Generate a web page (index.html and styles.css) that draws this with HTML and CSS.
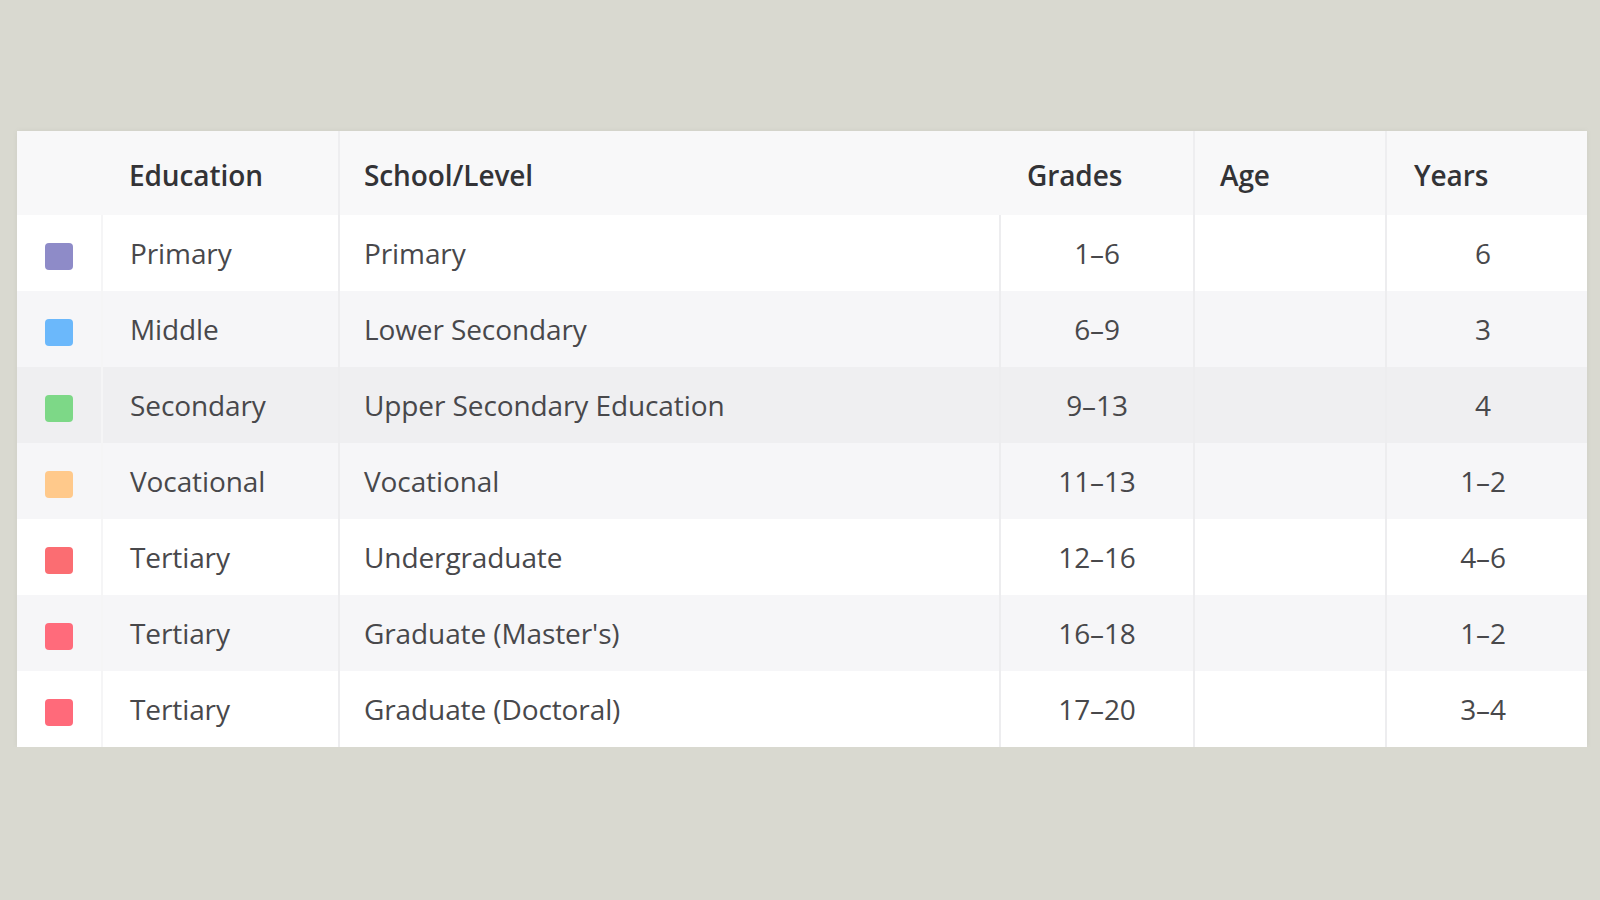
FILE: index.html
```html
<!DOCTYPE html>
<html lang="en">
<head>
<meta charset="utf-8">
<title>Education levels</title>
<link rel="stylesheet" href="styles.css">
</head>
<body>
<main class="page">
  <table class="edu">
    <colgroup>
      <col class="c-swatch">
      <col class="c-edu">
      <col class="c-school">
      <col class="c-grades">
      <col class="c-age">
      <col class="c-years">
    </colgroup>
    <thead>
      <tr>
        <th class="sw"></th>
        <th class="h-edu">Education</th>
        <th class="h-line h-school">School/Level</th>
        <th>Grades</th>
        <th class="h-line h-age">Age</th>
        <th class="h-line">Years</th>
      </tr>
    </thead>
    <tbody>
      <tr class="r-white">
        <td class="sw"><span class="swatch purple"></span></td>
        <td class="txt line-faint">Primary</td>
        <td class="txt school line">Primary</td>
        <td class="num line">1–6</td>
        <td class="num line"></td>
        <td class="num years line">6</td>
      </tr>
      <tr class="r-alt">
        <td class="sw"><span class="swatch blue"></span></td>
        <td class="txt line-faint">Middle</td>
        <td class="txt school line">Lower Secondary</td>
        <td class="num line">6–9</td>
        <td class="num line"></td>
        <td class="num years line">3</td>
      </tr>
      <tr class="r-hover">
        <td class="sw"><span class="swatch green"></span></td>
        <td class="txt line-faint">Secondary</td>
        <td class="txt school line">Upper Secondary Education</td>
        <td class="num line">9–13</td>
        <td class="num line"></td>
        <td class="num years line">4</td>
      </tr>
      <tr class="r-alt">
        <td class="sw"><span class="swatch orange"></span></td>
        <td class="txt line-faint">Vocational</td>
        <td class="txt school line">Vocational</td>
        <td class="num line">11–13</td>
        <td class="num line"></td>
        <td class="num years line">1–2</td>
      </tr>
      <tr class="r-white">
        <td class="sw"><span class="swatch red1"></span></td>
        <td class="txt line-faint">Tertiary</td>
        <td class="txt school line">Undergraduate</td>
        <td class="num line">12–16</td>
        <td class="num line"></td>
        <td class="num years line">4–6</td>
      </tr>
      <tr class="r-alt">
        <td class="sw"><span class="swatch red2"></span></td>
        <td class="txt line-faint">Tertiary</td>
        <td class="txt school line">Graduate (Master's)</td>
        <td class="num line">16–18</td>
        <td class="num line"></td>
        <td class="num years line">1–2</td>
      </tr>
      <tr class="r-white">
        <td class="sw"><span class="swatch red3"></span></td>
        <td class="txt line-faint">Tertiary</td>
        <td class="txt school line">Graduate (Doctoral)</td>
        <td class="num line">17–20</td>
        <td class="num line"></td>
        <td class="num years line">3–4</td>
      </tr>
    </tbody>
  </table>
</main>
</body>
</html>
```

FILE: styles.css
```css
html, body {
  margin: 0;
  padding: 0;
  background: #d9d9d0;
}

.page {
  padding: 131px 13px 0 17px;
  font-family: "Open Sans", "Noto Sans", "Liberation Sans", sans-serif;
}

.edu {
  width: 1570px;
  table-layout: fixed;
  border-collapse: collapse;
  background: #ffffff;
  box-shadow: 0 0 6px rgba(0, 0, 0, 0.05);
}

.c-swatch { width: 85px; }
.c-edu { width: 237px; }
.c-school { width: 661px; }
.c-grades { width: 194px; }
.c-age { width: 192px; }
.c-years { width: 201px; }

.edu thead tr {
  height: 84px;
  background: #f8f8f9;
}

.edu th {
  text-align: left;
  padding: 3px 0 0 27px;
  font-size: 28px;
  font-weight: 600;
  color: #333336;
  letter-spacing: -0.1px;
}

.edu th.sw { padding: 0; }

.edu th.h-line {
  border-left: 2px solid #eeeef0;
}

.edu th.h-school { padding-left: 24px; }
.edu th.h-age { padding-left: 25px; }

.edu tbody tr {
  height: 76px;
}

.r-white { background: #ffffff; }
.r-alt { background: #f6f6f8; }
.r-hover { background: #efeff1; }

.edu td {
  font-size: 28px;
  color: #48484b;
  padding: 0;
  letter-spacing: -0.1px;
}

.edu td.txt {
  padding-left: 27px;
  text-align: left;
}

.edu td.school { padding-left: 24px; }

.edu td.num {
  text-align: center;
}

.edu td.years { padding-right: 8px; }

.edu td.line {
  border-left: 2px solid #ededef;
}

.edu td.line-faint {
  border-left: 2px solid #f5f5f6;
}

.edu td.sw {
  text-align: center;
  vertical-align: middle;
}

.swatch {
  display: inline-block;
  width: 28px;
  height: 27px;
  border-radius: 4px;
  vertical-align: middle;
}

.purple { background: #8e8bc8; }
.blue { background: #6bb8fb; }
.green { background: #7dd887; }
.orange { background: #ffc98b; }
.red1 { background: #fb6d72; }
.red2 { background: #ff6b7b; }
.red3 { background: #ff6a7a; }
```
